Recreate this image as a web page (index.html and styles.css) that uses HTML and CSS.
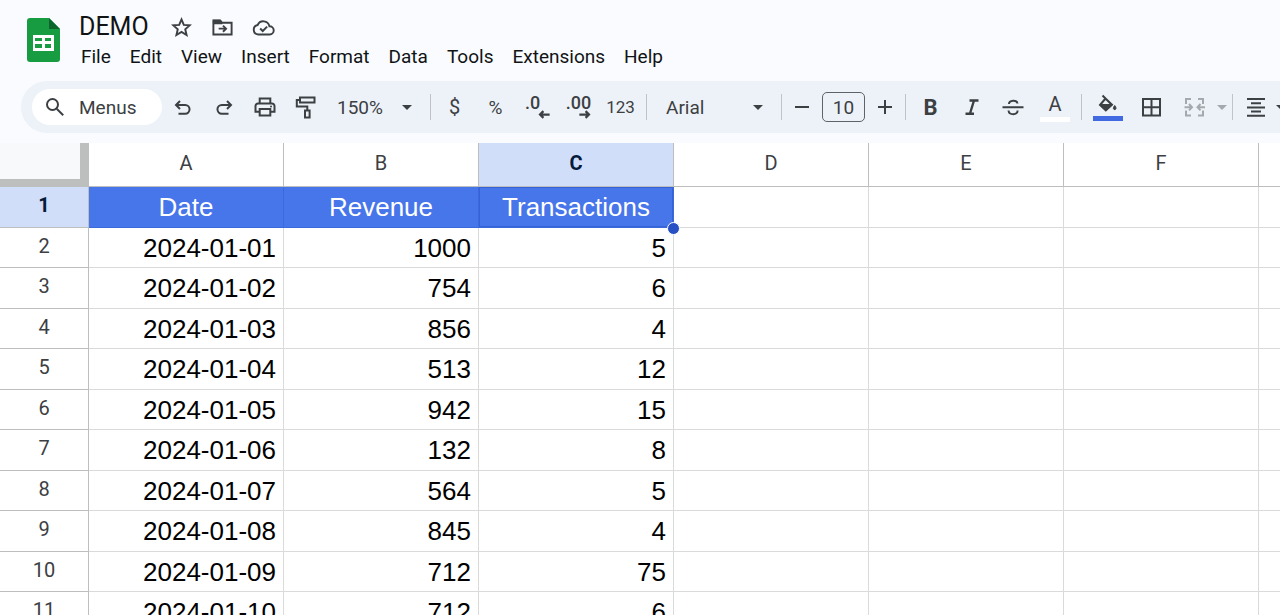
FILE: index.html
```html
<!DOCTYPE html>
<html lang="en">
<head>
<meta charset="utf-8">
<title>DEMO</title>
<link rel="stylesheet" href="styles.css">
</head>
<body>
<header class="top">
  <svg class="logo" viewBox="0 0 34 46" aria-hidden="true">
    <path fill="#179c42" d="M3 0h19l11 11v30a3 3 0 0 1-3 3H3a3 3 0 0 1-3-3V3a3 3 0 0 1 3-3z"/>
    <path fill="#0d652d" d="M22 0l11 11H22z"/>
    <path fill="#fff" fill-rule="evenodd" d="M6 17h21v16H6zM8 20v3h7v-3zM18 20v3h6v-3zM8 26v4h7v-4zM18 26v4h6v-4z"/>
  </svg>
  <div class="head">
    <div class="title-row">
      <h1 class="title">DEMO</h1>
      <button class="mini" aria-label="Star"><svg class="icon" viewBox="0 0 24 24"><path class="line bold" d="M12 3.600l2.400 5.700 6.100.5-4.600 4 1.400 6-5.300-3.200-5.300 3.200 1.400-6-4.600-4 6.100-.5z"/></svg></button>
      <button class="mini" aria-label="Move"><svg class="icon" viewBox="0 0 24 24"><path class="line bold" d="M2.500 4.700h7l2 2.300h10v12.300h-19zM8 13.200h7.500M12.500 10l3.200 3.200-3.200 3.200"/><path d="M2 4h8l2 3v1.500H2z"/></svg></button>
      <button class="mini" aria-label="Saved to Drive"><svg class="icon" viewBox="0 0 24 24"><path class="line bold" d="M6.500 19.300a5 5 0 0 1-.6-9.900 6.500 6.500 0 0 1 12.300 1.300 4.300 4.300 0 0 1 .3 8.600zM8.500 13l2.700 2.700 4.600-4.600"/></svg></button>
    </div>
    <nav class="menus">
      <button>File</button><button>Edit</button><button>View</button><button>Insert</button><button>Format</button><button>Data</button><button>Tools</button><button>Extensions</button><button>Help</button>
    </nav>
  </div>
</header>

<div class="toolbar" role="toolbar" aria-label="Formatting">
  <button class="search"><svg class="icon" viewBox="0 0 24 24"><g class="line bold"><circle cx="9.500" cy="9.500" r="5.500"/><path d="M13.700 13.700l6.500 6.500"/></g></svg>Menus</button>
  <button class="tool" aria-label="Undo"><svg class="icon" viewBox="0 0 24 24"><path class="line bold" d="M9 6L5 10l4 4M5.500 10h8.700a4.300 4.300 0 0 1 0 8.700H7.500"/></svg></button>
  <button class="tool" aria-label="Redo"><svg class="icon" viewBox="0 0 24 24"><path class="line bold" d="M15 6l4 4-4 4M18.500 10H9.800a4.300 4.300 0 0 0 0 8.700h6.700"/></svg></button>
  <button class="tool" aria-label="Print"><svg class="icon" viewBox="0 0 24 24"><path class="line bold" d="M6.700 8V3.500h10.600V8M6.500 16.700h-4V11a2.500 2.500 0 0 1 2.500-2.500h14a2.500 2.500 0 0 1 2.500 2.500v5.700h-4M6.700 14h10.600v6.500H6.700z"/><circle cx="18" cy="11.500" r="1"/></svg></button>
  <button class="tool" aria-label="Paint format"><svg class="icon" viewBox="0 0 24 24"><path class="line bold" d="M6 2.500h14.500v5H6zM6 5H2.800v6.500h10.500v4M11 15.500h4.600v7H11z"/></svg></button>
  <div class="drop zoom"><select aria-label="Zoom"><option>150%</option></select><svg class="caret" viewBox="0 0 10 5"><path d="M0 0h10L5 5z"/></svg></div>
  <span class="sep"></span>
  <button class="tool money" aria-label="Currency">$</button>
  <button class="tool percent" aria-label="Percent">%</button>
  <button class="tool decimals fewer" aria-label="Decrease decimals"><span>.0</span><svg class="arrow" viewBox="0 0 10 8"><path class="line bold" d="M10 4H2M4.500 1L1.500 4l3 3"/></svg></button>
  <button class="tool decimals" aria-label="Increase decimals"><span>.00</span><svg class="arrow" viewBox="0 0 10 8"><path class="line bold" d="M0 4h8M5.500 1l3 3-3 3"/></svg></button>
  <button class="tool mid number">123</button>
  <span class="sep"></span>
  <div class="drop font"><select aria-label="Font"><option>Arial</option></select><svg class="caret" viewBox="0 0 10 5"><path d="M0 0h10L5 5z"/></svg></div>
  <span class="sep"></span>
  <button class="tool step" aria-label="Decrease font size"><svg class="icon" viewBox="0 0 24 24"><path class="line bold" d="M5 12h14"/></svg></button>
  <input class="size" aria-label="Font size" value="10">
  <button class="tool step" aria-label="Increase font size"><svg class="icon" viewBox="0 0 24 24"><path class="line bold" d="M5 12h14M12 5v14"/></svg></button>
  <span class="sep"></span>
  <button class="tool strong" aria-label="Bold">B</button>
  <button class="tool" aria-label="Italic"><svg class="icon" viewBox="0 0 24 24"><path class="line heavy" d="M9.500 5.500h9M5.500 18.700h8.500M14 5.500l-4 13"/></svg></button>
  <button class="tool" aria-label="Strikethrough"><svg class="icon" viewBox="0 0 24 24"><path class="line bold" d="M1.500 12.300h21M8 9c0-4 8-4.500 8.500-.5M7.500 15.500c.5 5 9.500 5 9 0"/></svg></button>
  <button class="tool wide swatch" aria-label="Text color"><span>A</span><i class="bar white"></i></button>
  <span class="sep"></span>
  <button class="tool wide swatch" aria-label="Fill color"><svg class="fill" viewBox="0 0 24 20"><path class="line bold" d="M6.500 1.500l9 9M9.500 4.500L4 11l5.800 5.500 6.200-5.800z"/><path d="M4 10.500h12l-6.200 6.300zM18.700 11.500c4.500 5.500-4.500 5.500 0 0z" stroke="#3c4043" stroke-width="1"/></svg><i class="bar blue"></i></button>
  <button class="tool mid" aria-label="Borders"><svg class="icon" viewBox="0 0 24 24"><path class="line bold" d="M3 4h17v16.500H3zM11.500 4v16.500M3 12.200h17"/></svg></button>
  <button class="tool mid faded" aria-label="Merge cells"><svg class="icon" viewBox="0 0 24 24"><path class="line bold" d="M8 4H3v5M15 4h5v5M8 20.500H3v-5M15 20.500h5v-5M1.500 12.200H9M6 9l3 3.200-3 3.200M22 12.200h-7M17.500 9l-3 3.200 3 3.200"/></svg></button>
  <button class="more faded" aria-label="Merge options"><svg class="caret" viewBox="0 0 10 5"><path d="M0 0h10L5 5z"/></svg></button>
  <span class="sep"></span>
  <button class="tool align" aria-label="Horizontal align"><svg class="icon" viewBox="0 0 24 24"><path class="line bold" d="M3 4h18M7 8.200h10M3 12.400h18M7 16.600h10M3 20.800h18"/></svg></button>
  <button class="more" aria-label="Align options"><svg class="caret" viewBox="0 0 10 5"><path d="M0 0h10L5 5z"/></svg></button>
</div>

<main class="sheet">
<table class="grid">
  <thead><tr><th class="corner" aria-label="Select all"></th><th>A</th><th>B</th><th class="on">C</th><th>D</th><th>E</th><th>F</th><th></th></tr></thead>
  <tbody>
    <tr class="heading"><th class="on">1</th><td>Date</td><td>Revenue</td><td class="active">Transactions<i class="handle"></i></td><td></td><td></td><td></td><td></td></tr>
    <tr><th>2</th><td>2024-01-01</td><td>1000</td><td>5</td><td></td><td></td><td></td><td></td></tr>
    <tr><th>3</th><td>2024-01-02</td><td>754</td><td>6</td><td></td><td></td><td></td><td></td></tr>
    <tr><th>4</th><td>2024-01-03</td><td>856</td><td>4</td><td></td><td></td><td></td><td></td></tr>
    <tr><th>5</th><td>2024-01-04</td><td>513</td><td>12</td><td></td><td></td><td></td><td></td></tr>
    <tr><th>6</th><td>2024-01-05</td><td>942</td><td>15</td><td></td><td></td><td></td><td></td></tr>
    <tr><th>7</th><td>2024-01-06</td><td>132</td><td>8</td><td></td><td></td><td></td><td></td></tr>
    <tr><th>8</th><td>2024-01-07</td><td>564</td><td>5</td><td></td><td></td><td></td><td></td></tr>
    <tr><th>9</th><td>2024-01-08</td><td>845</td><td>4</td><td></td><td></td><td></td><td></td></tr>
    <tr><th>10</th><td>2024-01-09</td><td>712</td><td>75</td><td></td><td></td><td></td><td></td></tr>
    <tr><th>11</th><td>2024-01-10</td><td>712</td><td>6</td><td></td><td></td><td></td><td></td></tr>
  </tbody>
</table>
</main>
</body>
</html>
```
FILE: styles.css
```css
* { box-sizing: border-box; }
body {
  margin: 0;
  height: 100vh;
  overflow: hidden;
  display: flex;
  flex-direction: column;
  background: #f9fbfe;
  color: #111315;
  font-family: Roboto, "Liberation Sans", sans-serif;
}
button, select, input { font: inherit; color: inherit; border: 0; background: none; padding: 0; margin: 0; }
svg { display: block; fill: currentColor; flex: none; }
.icon { width: 24px; height: 24px; }
.line { fill: none; stroke: currentColor; stroke-width: 1.6; }
.bold { stroke-width: 2; }
.heavy { stroke-width: 2.4; }

.top { display: flex; gap: 18px; padding: 12px 0 0 27px; height: 81px; flex: none; }
.logo { width: 34px; height: 46px; margin-top: 6px; }
.title-row { display: flex; align-items: center; height: 30px; }
.title { margin: 0 21px 0 0; font-size: 25px; line-height: 30px; font-weight: 400; }
.mini { height: 26px; margin-right: 18px; color: #3c4043; }
.mini svg { width: 23px; height: 23px; }
.menus { display: flex; gap: 19px; padding-left: 2px; font-size: 19px; line-height: 30px; }

.toolbar {
  display: flex;
  align-items: center;
  flex: none;
  height: 52px;
  margin-left: 21px;
  padding-left: 11px;
  border-radius: 26px 0 0 26px;
  background: #edf2f9;
  color: #3c4043;
  font-size: 19px;
  overflow: hidden;
}
.toolbar > * { flex: none; }
.search {
  display: flex;
  align-items: center;
  gap: 12px;
  width: 130px;
  height: 36px;
  padding-left: 11px;
  border-radius: 18px;
  background: #fff;
}
.tool { display: flex; align-items: center; justify-content: center; width: 41px; height: 36px; }
.mid { width: 43px; }
.wide { width: 44px; }
.step { width: 32px; }
.align { width: 38px; }
.more { width: 12px; display: flex; justify-content: center; }
.number { font-size: 17px; }
.percent { padding-right: 2px; }
.money { font-size: 20px; padding-right: 2px; }
.strong { font-size: 22px; font-weight: 700; }
.faded { color: #a5a9ad; }
.decimals { flex-direction: column; font-size: 18px; font-weight: 500; line-height: 14px; }
.fewer span { margin-right: 10px; }
.arrow { width: 12px; height: 9px; margin-left: 12px; }
.sep { width: 1px; height: 26px; margin: 0 4px; background: #c0c4c9; }
.drop { position: relative; }
.drop select { width: 100%; height: 36px; appearance: none; }
.caret { width: 10px; height: 5px; }
.drop .caret { position: absolute; right: 14px; top: 16px; pointer-events: none; }
.zoom { width: 100px; padding-left: 11px; }
.font { width: 126px; padding-left: 15px; }
.size { width: 43px; height: 30px; margin: 0 4px; border: 1px solid #5f6368; border-radius: 5px; text-align: center; }
.swatch { flex-direction: column; gap: 2px; }
.swatch span { line-height: 22px; font-size: 20px; }
.fill { width: 24px; height: 20px; }
.bar { width: 30px; height: 5px; }
.white { background: #fff; }
.blue { background: #4169e1; }

.sheet { margin-top: 10px; flex: 1; overflow: hidden; background: #fff; }
.grid { width: 1454px; table-layout: fixed; border-collapse: separate; border-spacing: 0; }
.grid th, .grid td { height: 40px; padding: 0; line-height: 30px; border: 0 solid #d9dada; border-width: 0 1px 1px 0; }
.grid th { border-color: #bdbebe; font-size: 20px; font-weight: 400; color: #3c4043; }
.grid thead th { height: 44px; width: 195px; padding-bottom: 4px; }
.grid thead .corner { width: 89px; background: #f8f9fa; border-width: 0 9px 8px 0; }
.grid tbody th { padding-bottom: 4px; }
.grid tbody tr:nth-child(odd) > * { height: 41px; }
.grid td { padding-right: 7px; text-align: right; font-family: "Liberation Sans", Arial, sans-serif; font-size: 26px; color: #000; }
.grid .on { background: #d0defa; color: #061b3a; font-weight: 700; }
.grid .heading td { padding-right: 0; text-align: center; }
.grid .heading td:nth-child(-n+4) { background: #4775ea; color: #fff; border-color: #3c69dc; }
.grid .heading .active { position: relative; box-shadow: inset 1px 1px #3662d7, inset -1px -1px #3662d7; }
.handle { position: absolute; right: -7px; bottom: -8px; width: 13px; height: 13px; border: 1px solid #fff; border-radius: 50%; background: #2850c5; }
```
